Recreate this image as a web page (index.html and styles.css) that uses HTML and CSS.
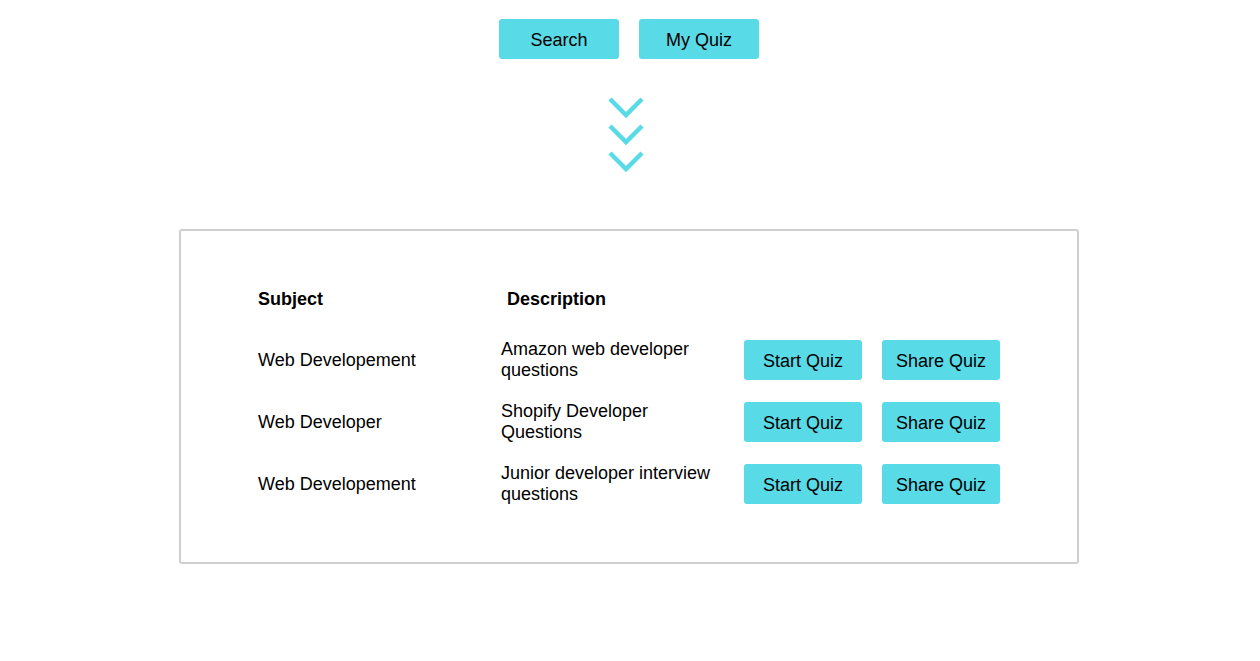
FILE: index.html
```html
<!DOCTYPE html>
<html lang="en">
<head>
<meta charset="utf-8">
<title>Quiz</title>
<link rel="stylesheet" href="styles.css">
</head>
<body>
<div class="page">
  <nav class="top-nav">
    <button class="btn btn-top">Search</button>
    <button class="btn btn-top">My Quiz</button>
  </nav>
  <div class="chevrons">
    <svg width="38" height="78" viewBox="0 0 38 78" aria-hidden="true">
      <polyline points="3,3 19,19 35,3" />
      <polyline points="3,30 19,46 35,30" />
      <polyline points="3,57 19,73 35,57" />
    </svg>
  </div>
  <section class="card">
    <div class="row head">
      <div class="col-subject">Subject</div>
      <div class="col-desc head-desc">Description</div>
    </div>
    <div class="row">
      <div class="col-subject">Web Developement</div>
      <div class="col-desc">Amazon web developer questions</div>
      <div class="actions">
        <button class="btn btn-row">Start Quiz</button>
        <button class="btn btn-row">Share Quiz</button>
      </div>
    </div>
    <div class="row">
      <div class="col-subject">Web Developer</div>
      <div class="col-desc">Shopify Developer Questions</div>
      <div class="actions">
        <button class="btn btn-row">Start Quiz</button>
        <button class="btn btn-row">Share Quiz</button>
      </div>
    </div>
    <div class="row">
      <div class="col-subject">Web Developement</div>
      <div class="col-desc">Junior developer interview questions</div>
      <div class="actions">
        <button class="btn btn-row">Start Quiz</button>
        <button class="btn btn-row">Share Quiz</button>
      </div>
    </div>
  </section>
</div>
</body>
</html>
```

FILE: styles.css
```css
* { box-sizing: border-box; }

html, body {
  margin: 0;
  padding: 0;
  background: #ffffff;
}

body {
  font-family: "Liberation Sans", Arial, Helvetica, sans-serif;
  font-size: 18px;
  line-height: 21px;
  color: #000;
}

.page {
  width: 1258px;
  display: flex;
  flex-direction: column;
  align-items: center;
}

.top-nav {
  display: flex;
  gap: 20px;
  padding-top: 19px;
}

.btn {
  font-family: inherit;
  font-size: 18px;
  line-height: 21px;
  color: #000;
  background: #59dae7;
  border: none;
  border-radius: 3px;
  height: 40px;
  padding: 2px 0 0 0;
  cursor: pointer;
}

.btn-top { width: 120px; }
.btn-row { width: 118px; }

.chevrons {
  display: flex;
  justify-content: center;
  margin-top: 37px;
  margin-right: 7px;
  height: 78px;
}

.chevrons polyline {
  fill: none;
  stroke: #59dae7;
  stroke-width: 4.5;
  stroke-linecap: butt;
  stroke-linejoin: miter;
}

.card {
  margin-top: 55px;
  width: 900px;
  border: 2px solid #cfcfcf;
  border-radius: 3px;
  padding: 58px 0 57px 77px;
  display: flex;
  flex-direction: column;
  gap: 20px;
}

.row {
  display: flex;
  align-items: center;
  min-height: 42px;
}

.row.head {
  min-height: 21px;
  margin-bottom: 9px;
  font-weight: bold;
}

.col-subject {
  width: 243px;
  flex: none;
}

.col-desc {
  width: 243px;
  flex: none;
  padding-right: 23px;
}

.head-desc {
  padding-left: 6px;
}

.actions {
  display: flex;
  gap: 20px;
}
```
